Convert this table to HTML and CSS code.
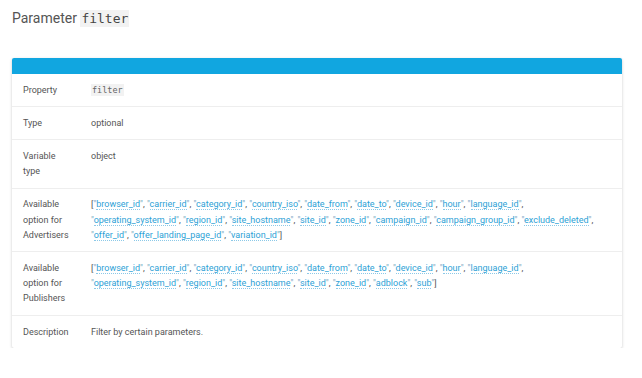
FILE: index.html
```html
<!DOCTYPE html>
<html>
<head>
<meta charset="utf-8">
<link rel="stylesheet" href="styles.css">
</head>
<body>
<div class="page">
  <h2 class="title">Parameter <code class="title-code">filter</code></h2>
  <div class="card">
    <div class="card-head"></div>
    <div class="row">
      <div class="label">Property</div>
      <div class="value"><code class="code">filter</code></div>
    </div>
    <div class="row">
      <div class="label">Type</div>
      <div class="value">optional</div>
    </div>
    <div class="row">
      <div class="label">Variable type</div>
      <div class="value">object</div>
    </div>
    <div class="row">
      <div class="label">Available option for Advertisers</div>
      <div class="value">[<span class="q">"</span><a class="opt">browser_id</a><span class="q">"</span>, <span class="q">"</span><a class="opt">carrier_id</a><span class="q">"</span>, <span class="q">"</span><a class="opt">category_id</a><span class="q">"</span>, <span class="q">"</span><a class="opt">country_iso</a><span class="q">"</span>, <span class="q">"</span><a class="opt">date_from</a><span class="q">"</span>, <span class="q">"</span><a class="opt">date_to</a><span class="q">"</span>, <span class="q">"</span><a class="opt">device_id</a><span class="q">"</span>, <span class="q">"</span><a class="opt">hour</a><span class="q">"</span>, <span class="q">"</span><a class="opt">language_id</a><span class="q">"</span>, <span class="q">"</span><a class="opt">operating_system_id</a><span class="q">"</span>, <span class="q">"</span><a class="opt">region_id</a><span class="q">"</span>, <span class="q">"</span><a class="opt">site_hostname</a><span class="q">"</span>, <span class="q">"</span><a class="opt">site_id</a><span class="q">"</span>, <span class="q">"</span><a class="opt">zone_id</a><span class="q">"</span>, <span class="q">"</span><a class="opt">campaign_id</a><span class="q">"</span>, <span class="q">"</span><a class="opt">campaign_group_id</a><span class="q">"</span>, <span class="q">"</span><a class="opt">exclude_deleted</a><span class="q">"</span>, <span class="q">"</span><a class="opt">offer_id</a><span class="q">"</span>, <span class="q">"</span><a class="opt">offer_landing_page_id</a><span class="q">"</span>, <span class="q">"</span><a class="opt">variation_id</a><span class="q">"</span>]</div>
    </div>
    <div class="row">
      <div class="label">Available option for Publishers</div>
      <div class="value">[<span class="q">"</span><a class="opt">browser_id</a><span class="q">"</span>, <span class="q">"</span><a class="opt">carrier_id</a><span class="q">"</span>, <span class="q">"</span><a class="opt">category_id</a><span class="q">"</span>, <span class="q">"</span><a class="opt">country_iso</a><span class="q">"</span>, <span class="q">"</span><a class="opt">date_from</a><span class="q">"</span>, <span class="q">"</span><a class="opt">date_to</a><span class="q">"</span>, <span class="q">"</span><a class="opt">device_id</a><span class="q">"</span>, <span class="q">"</span><a class="opt">hour</a><span class="q">"</span>, <span class="q">"</span><a class="opt">language_id</a><span class="q">"</span>, <span class="q">"</span><a class="opt">operating_system_id</a><span class="q">"</span>, <span class="q">"</span><a class="opt">region_id</a><span class="q">"</span>, <span class="q">"</span><a class="opt">site_hostname</a><span class="q">"</span>, <span class="q">"</span><a class="opt">site_id</a><span class="q">"</span>, <span class="q">"</span><a class="opt">zone_id</a><span class="q">"</span>, <span class="q">"</span><a class="opt">adblock</a><span class="q">"</span>, <span class="q">"</span><a class="opt">sub</a><span class="q">"</span>]</div>
    </div>
    <div class="row">
      <div class="label">Description</div>
      <div class="value">Filter by certain parameters.</div>
    </div>
  </div>
</div>
</body>
</html>
```
FILE: styles.css
```css
html, body {
  margin: 0;
  padding: 0;
  background: #fff;
}
.page {
  padding: 8px 20px 0 12px;
  font-family: Roboto, "Liberation Sans", sans-serif;
  color: #555;
}
.title {
  margin: 0 0 29px 0;
  font-weight: 400;
  font-size: 14px;
  line-height: 20px;
  color: #555;
}
.title-code {
  font-family: "DejaVu Sans Mono", "Liberation Mono", monospace;
  font-size: 13px;
  background: #f2f2f2;
  padding: 1px 1px;
  color: #444;
}
.card {
  background: #fff;
  border-radius: 2px;
  box-shadow: 0 1px 3px rgba(0,0,0,0.22);
  overflow: hidden;
}
.card-head {
  height: 16px;
  background: #11a6e0;
}
.row {
  display: flex;
  padding: 8.5px 11px 8.5px 11px;
  border-top: 1px solid #eeeeee;
  font-size: 9px;
  line-height: 15.2px;
}
.card-head + .row {
  border-top: none;
}
.label {
  width: 50px;
  flex: none;
  margin-right: 18px;
  color: #555;
}
.value {
  flex: 1;
  color: #555;
}
.code {
  font-family: "DejaVu Sans Mono", "Liberation Mono", monospace;
  font-size: 8.5px;
  line-height: 10px;
  background: #f2f2f2;
  padding: 1px 1px;
  color: #666;
}
.q {
  color: #7aa9c4;
}
.opt {
  color: #2d9fd6;
  text-decoration: none;
  border-bottom: 1px dotted #8cc9e8;
}
```
